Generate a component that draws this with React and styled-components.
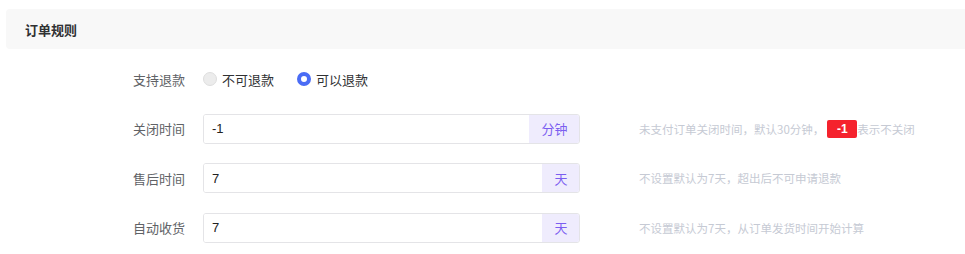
import React from "react";
import styled, { createGlobalStyle } from "styled-components";

const Global = createGlobalStyle`
  html, body { margin: 0; padding: 0; background: #fff; }
  body { font-family: "Noto Sans CJK SC", "Noto Sans", sans-serif; font-size: 13px; color: #333; }
  * { box-sizing: border-box; }
`;

const Page = styled.div`
  padding: 9px 0 0 6px;
  width: 965px;
  height: 254px;
  overflow: hidden;
`;

const Header = styled.div`
  height: 40px;
  background: #f8f8f8;
  border-radius: 4px 0 0 4px;
  display: flex;
  align-items: center;
  padding-left: 19px;
  font-size: 13px;
  font-weight: 700;
  color: #303133;
`;

const Form = styled.div`
  display: flex;
  flex-direction: column;
  gap: 19.5px;
  padding: 15px 0 0 99px;
`;

const Row = styled.div`
  display: flex;
  align-items: center;
  height: 30px;
`;

const Label = styled.div`
  width: 80px;
  text-align: right;
  color: #606266;
  font-size: 13px;
  margin-right: 18px;
`;

const RadioGroup = styled.div`
  display: flex;
  align-items: center;
  gap: 23px;
`;

const RadioOption = styled.label`
  display: flex;
  align-items: center;
  gap: 5px;
  color: #303133;
  font-size: 13px;
`;

const RadioDot = styled.span`
  width: 14px;
  height: 14px;
  border-radius: 50%;
  box-sizing: border-box;
  background: ${(p) => (p.$checked ? "#fff" : "#ececec")};
  border: ${(p) => (p.$checked ? "4px solid #4a6cf5" : "1px solid #dedede")};
`;

const InputGroup = styled.div`
  display: flex;
  width: 377px;
  height: 30px;
  border: 1px solid #e4e4e7;
  border-radius: 3px;
  overflow: hidden;
`;

const Input = styled.div`
  flex: 1;
  display: flex;
  align-items: center;
  padding-left: 8px;
  font-family: "Liberation Sans", Arial, sans-serif;
  font-size: 13px;
  color: #222;
  background: #fff;
`;

const Addon = styled.div`
  width: ${(p) => p.$w}px;
  background: #efecfd;
  color: #7b5ef0;
  display: flex;
  align-items: center;
  justify-content: center;
  font-size: 13px;
  margin: -1px -1px -1px 0;
`;

const Help = styled.div`
  margin-left: 59px;
  color: #c6cad4;
  font-size: 11.5px;
  display: flex;
  align-items: center;
  white-space: nowrap;
`;

const Badge = styled.span`
  display: inline-flex;
  align-items: center;
  justify-content: center;
  background: #f5222d;
  color: #fff;
  font-weight: 700;
  font-family: "Liberation Sans", Arial, sans-serif;
  font-size: 12px;
  height: 18px;
  width: 30px;
  border-radius: 2px;
  margin: 0 0 0 3px;
`;

const rows = [
  { label: "关闭时间", value: "-1", unit: "分钟", w: 51, help: "close" },
  { label: "售后时间", value: "7", unit: "天", w: 38, help: "不设置默认为7天，超出后不可申请退款" },
  { label: "自动收货", value: "7", unit: "天", w: 38, help: "不设置默认为7天，从订单发货时间开始计算" },
];

export default function App() {
  return (
    <Page>
      <Global />
      <Header>订单规则</Header>
      <Form>
        <Row>
          <Label>支持退款</Label>
          <RadioGroup>
            <RadioOption>
              <RadioDot />
              不可退款
            </RadioOption>
            <RadioOption>
              <RadioDot $checked />
              可以退款
            </RadioOption>
          </RadioGroup>
        </Row>
        {rows.map((r) => (
          <Row key={r.label}>
            <Label>{r.label}</Label>
            <InputGroup>
              <Input>{r.value}</Input>
              <Addon $w={r.w}>{r.unit}</Addon>
            </InputGroup>
            <Help>
              {r.help === "close" ? (
                <>
                  未支付订单关闭时间，默认30分钟，<Badge>-1</Badge>表示不关闭
                </>
              ) : (
                r.help
              )}
            </Help>
          </Row>
        ))}
      </Form>
    </Page>
  );
}
